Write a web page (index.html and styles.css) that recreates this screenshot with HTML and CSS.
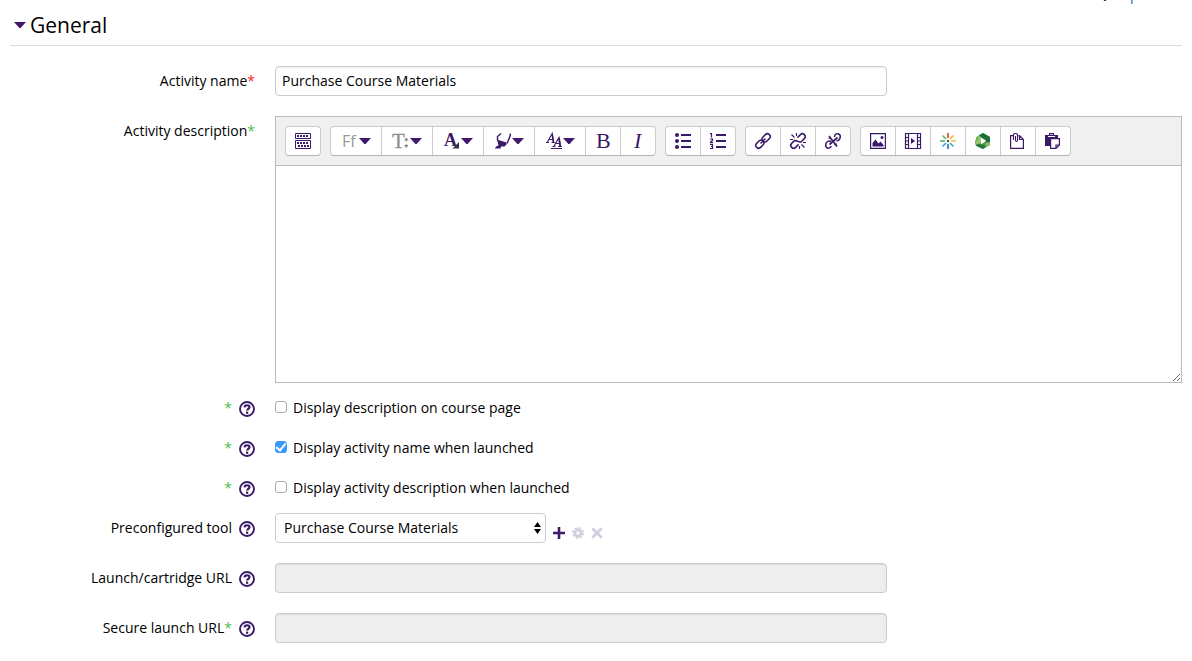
FILE: index.html
```html
<!DOCTYPE html>
<html lang="en">
<head>
<meta charset="utf-8">
<title>General settings</title>
<link rel="stylesheet" href="styles.css">
</head>
<body>
<svg class="defs" aria-hidden="true">
  <symbol id="help" viewBox="0 0 16 16"><circle cx="8" cy="8" r="7" fill="none" stroke="#3a1a66" stroke-width="1.9"/><path d="M5.6 6.4C5.7 3.6 10.5 3.6 10.5 6.2C10.5 7.9 8.1 7.8 8.1 9.6" fill="none" stroke="#3a1a66" stroke-width="2.2"/><rect x="7" y="10.6" width="2.2" height="2.2" fill="#3a1a66"/></symbol>
  <symbol id="caret" viewBox="0 0 12 6"><path d="M0 0H12L6.6 6H5.4Z" fill="#3f1a6b"/></symbol>
</svg>
<main class="page">
  <div class="collapse"><a class="collapse-link" href="#"><svg class="caret" aria-hidden="true"><use href="#caret"/></svg>Expand all</a></div>
  <form class="section">
    <h2 class="title"><svg class="caret" aria-hidden="true"><use href="#caret"/></svg>General</h2>

    <div class="row">
      <div class="label"><label for="name">Activity name</label><span class="star required">*</span></div>
      <div class="field"><input class="text" id="name" type="text" value="Purchase Course Materials"></div>
    </div>

    <div class="row tight">
      <div class="label"><label for="desc">Activity description</label><span class="star">*</span></div>
      <div class="editor">
        <div class="toolbar">
          <div class="group">
            <button type="button" class="tool" aria-label="Toggle toolbar"><svg class="icon" viewBox="0 0 16 16"><path d="M.5.5H15.5V5.5H.5ZM.5 7.5H15.5V15.5H.5Z" fill="none" stroke="#3a1a66"/><path d="M2 3H14M2 10H14M3 13H14" stroke="#3a1a66" stroke-width="2" stroke-dasharray="2 1"/></svg></button>
          </div>
          <div class="group">
            <button type="button" class="tool wide" aria-label="Font family"><svg class="icon" viewBox="0 0 16 16"><text class="sans" x="0" y="14" font-size="16" fill="#999">Ff</text></svg><svg class="caret"><use href="#caret"/></svg></button>
            <button type="button" class="tool wide" aria-label="Font size"><svg class="icon" viewBox="0 0 16 16"><text class="serif" x="-1" y="15" font-size="21" fill="#8f8f8f" stroke="#8f8f8f" stroke-width=".3">T</text><path d="M11 7.5L13.3 4.5L15.6 7.5ZM11 12L13.3 15L15.6 12Z" fill="#888"/><path d="M13.3 7V8.5M13.3 11V12.5" stroke="#999"/></svg><svg class="caret"><use href="#caret"/></svg></button>
            <button type="button" class="tool wide" aria-label="Text color"><svg class="icon" viewBox="0 0 16 16"><text class="serif bold" x="0" y="13" font-size="18" fill="#3a1a66">A</text><path d="M15 9V15.5H8.5Z" fill="#333"/></svg><svg class="caret"><use href="#caret"/></svg></button>
            <button type="button" class="tool wide" aria-label="Highlight"><svg class="icon" viewBox="0 0 16 16"><path d="M6 .5L2.5 3.5V7.5M15.3 .5V2.5L12 10.5" fill="none" stroke="#3a1a66" stroke-width="1.4"/><path d="M2 6.5L11.5 9.5V11.5L9.5 13.5H6L5.5 15.5H0L1 13.5L3.5 12.5Z" fill="#3a1a66"/></svg><svg class="caret"><use href="#caret"/></svg></button>
            <button type="button" class="tool wide" aria-label="Styles"><svg class="icon" viewBox="0 0 16 16"><path d="M0 9.5H3M1.2 9.5L6.2 .5L7.6 9.5M5.6 9.5H9M3.2 6.5H7" fill="none" stroke="#3a1a66" stroke-width="1.1"/><path d="M6.2 1L7.4 9" stroke="#3a1a66" stroke-width="1.6"/><path d="M6.5 13.5H9.5M7.8 13.5L13 4.5L14.3 13.5M12 13.5H16M9.8 10.5H14" fill="none" stroke="#3a1a66" stroke-width="1.1"/><path d="M13 5L14.2 13" stroke="#3a1a66" stroke-width="1.8"/><path d="M5 15.5H16" stroke="#3a1a66"/></svg><svg class="caret"><use href="#caret"/></svg></button>
            <button type="button" class="tool" aria-label="Bold"><svg class="icon" viewBox="0 0 16 16"><text class="serif" x="1" y="15" font-size="22" fill="#3a1a66">B</text></svg></button>
            <button type="button" class="tool" aria-label="Italic"><svg class="icon" viewBox="0 0 16 16"><text class="serif italic" x="4" y="15" font-size="22" fill="#3a1a66">I</text></svg></button>
          </div>
          <div class="group">
            <button type="button" class="tool" aria-label="Bulleted list"><svg class="icon" viewBox="0 0 16 16"><path d="M6 2H16M6 8H16M6 14H16" stroke="#3a1a66" stroke-width="2"/><g fill="#3a1a66"><circle cx="2" cy="2" r="2"/><circle cx="2" cy="8" r="2"/><circle cx="2" cy="14" r="2"/></g></svg></button>
            <button type="button" class="tool" aria-label="Numbered list"><svg class="icon" viewBox="0 0 16 16"><path d="M6 2H16M6 8H16M6 14H16" stroke="#3a1a66" stroke-width="2"/><path d="M0 .6H1.5V4.5M0 6H2.5V7.5L.5 9V9.6H3M0 11.5H2.5V15.5H0M1 13.5H2.5" fill="none" stroke="#3a1a66" stroke-width="1.2"/></svg></button>
          </div>
          <div class="group">
            <button type="button" class="tool" aria-label="Link"><svg class="icon" viewBox="0 0 16 16"><g fill="none" stroke="#3a1a66" stroke-width="1.5" transform="rotate(-45 8 8)"><rect x="-1" y="5.2" width="9" height="5.6" rx="2.8"/><rect x="8" y="5.2" width="9" height="5.6" rx="2.8"/><path d="M4.5 8H11.5"/></g></svg></button>
            <button type="button" class="tool" aria-label="Unlink"><svg class="icon" viewBox="0 0 16 16"><g fill="none" stroke="#3a1a66" stroke-width="1.5"><g transform="rotate(-45 8 8)"><path d="M6 10.8H1.8A2.8 2.8 0 0 1 1.8 5.2H6L9 10.8H14.2A2.8 2.8 0 0 0 14.2 5.2H10"/></g><path d="M6.5 0V3M1.5 1.5L4.5 4.5M0 6.5H3M9.5 13V16M11.5 11.5L14.5 14.5M13 9.5H16" stroke-width="1.1"/></g></svg></button>
            <button type="button" class="tool" aria-label="Prevent automatic links"><svg class="icon" viewBox="0 0 16 16"><g fill="none" stroke="#3a1a66" stroke-width="1.5"><path d="M6 9C4.5 7 .7 8.5 .7 12C.7 16 5 16.2 6.3 13M9.5 4C9.5 1 12 .5 13.2 .8C16.5 2 15.8 7.5 11.5 8"/><path d="M4 3L12 13.5M12.5 4.5L4.5 11.5" stroke-width="1.7"/><path d="M9 11.5L12 11M3.5 5.5L5.5 5" stroke-width="1"/></g></svg></button>
          </div>
          <div class="group">
            <button type="button" class="tool" aria-label="Image"><svg class="icon" viewBox="0 0 16 16"><path d="M.6.6H15.4V15.4H.6Z" fill="none" stroke="#3a1a66" stroke-width="1.2"/><path d="M2.5 13.5V10L5.5 6.5L8.5 10.5L10.5 8.5L13.5 12V13.5Z" fill="#3a1a66"/><circle cx="12" cy="4.5" r="1.5" fill="#3a1a66"/></svg></button>
            <button type="button" class="tool" aria-label="Media"><svg class="icon" viewBox="0 0 16 16"><path d="M.5.5H15.5V15.5H.5ZM3.5 0V16M12.5 0V16M0 4.5H4M0 8H4M0 11.5H4M12 4.5H16M12 8H16M12 11.5H16" fill="none" stroke="#3a1a66" stroke-width="1.2"/><path d="M6 5L10 8L6 11Z" fill="#3a1a66"/></svg></button>
            <button type="button" class="tool" aria-label="Kaltura media"><svg class="icon" viewBox="0 0 16 16"><g stroke-width="1.6"><path d="M8 0V5" stroke="#e5402d"/><path d="M10 6L13.5 2.5" stroke="#f3b52c"/><path d="M11 8H16" stroke="#f3c945"/><path d="M10 10L13.5 13.5" stroke="#39a6cd"/><path d="M8 11V16" stroke="#2b72b9"/><path d="M6 10L2.5 13.5" stroke="#2da5cf"/><path d="M0 8H5" stroke="#55b66d"/><path d="M2.5 2.5L6 6" stroke="#65b75d"/></g><circle cx="8" cy="8" r="1.2" fill="#4a4a4a"/></svg></button>
            <button type="button" class="tool" aria-label="Ensemble video"><svg class="icon" viewBox="0 0 16 16"><path d="M8 0L15 4V12L8 16L1 13L0 9L1.5 4Z" fill="#4f9c4b"/><path d="M8 0L15 4V10L10.5 9V6.5L5 3.5L4 2.3Z" fill="#1b7039"/><path d="M3.5 2.5L6 4V9L3 12.5L0 11Z" fill="#8fc566"/><path d="M1 11.5L5.5 10.5L11 13.5L8 16L2 13Z" fill="#27783d"/><path d="M10.5 10L15 9V12L11 14Z" fill="#8abd63"/><path d="M5.8 4.5L11.2 8L5.8 11.5Z" fill="#fff"/></svg></button>
            <button type="button" class="tool" aria-label="Manage files"><svg class="icon" viewBox="0 0 16 16"><path d="M3 2.6H.6V15.4H13.4V6.5L9.5 2.6H8.5M9.5 2.6V6.5H13.4" fill="none" stroke="#3a1a66" stroke-width="1.2"/><path d="M3.5 7V1.8C3.5 0 7.5 0 7.5 1.8V7C7.5 9 5.5 9 5.5 7V3" fill="none" stroke="#3a1a66" stroke-width="1.1"/></svg></button>
            <button type="button" class="tool" aria-label="Paste"><svg class="icon" viewBox="0 0 16 16"><path d="M0 2H13V6H6V13H0Z" fill="#3a1a66"/><path d="M4.5 2V.6H8.5V2" fill="none" stroke="#3a1a66" stroke-width="1.2"/><path d="M3 3.5H10" stroke="#fff"/><path d="M5.6 5.6H14.4V12L11 15.4H5.6ZM14.4 12H11V15.4" fill="#fff" stroke="#3a1a66" stroke-width="1.2"/></svg></button>
          </div>
        </div>
        <textarea class="area" id="desc"></textarea>
      </div>
    </div>

    <div class="row tight">
      <div class="label"><span class="star">*</span><button type="button" class="help" aria-label="Help with Display description"><svg class="icon"><use href="#help"/></svg></button></div>
      <div class="field"><input class="check" type="checkbox" id="c1"><label for="c1">Display description on course page</label></div>
    </div>
    <div class="row tight">
      <div class="label"><span class="star">*</span><button type="button" class="help" aria-label="Help with Display activity name"><svg class="icon"><use href="#help"/></svg></button></div>
      <div class="field"><input class="check" type="checkbox" id="c2" checked><label for="c2">Display activity name when launched</label></div>
    </div>
    <div class="row tight">
      <div class="label"><span class="star">*</span><button type="button" class="help" aria-label="Help with Display activity description"><svg class="icon"><use href="#help"/></svg></button></div>
      <div class="field"><input class="check" type="checkbox" id="c3"><label for="c3">Display activity description when launched</label></div>
    </div>

    <div class="row">
      <div class="label"><label for="tool">Preconfigured tool</label><button type="button" class="help" aria-label="Help with Preconfigured tool"><svg class="icon"><use href="#help"/></svg></button></div>
      <div class="field">
        <div class="select-wrap"><select class="select" id="tool"><option>Purchase Course Materials</option></select><svg class="updown" viewBox="0 0 7 12" aria-hidden="true"><path d="M0 5L3.5 0L7 5ZM0 7H7L3.5 12Z" fill="#000"/></svg></div>
        <div class="actions">
          <button type="button" class="action" aria-label="Add"><svg class="small" viewBox="0 0 12 12"><path d="M6 0V12M0 6H12" stroke="#3f1a6b" stroke-width="2.6"/></svg></button>
          <button type="button" class="action" aria-label="Edit" disabled><svg class="small" viewBox="0 0 12 12"><circle cx="6" cy="6" r="3.1" fill="none" stroke="#d4cde0" stroke-width="2.8"/><circle cx="6" cy="6" r="5.1" fill="none" stroke="#d4cde0" stroke-width="1.8" stroke-dasharray="2.2 1.8"/></svg></button>
          <button type="button" class="action" aria-label="Delete" disabled><svg class="small" viewBox="0 0 12 12"><path d="M1.2 1.2L10.8 10.8M10.8 1.2L1.2 10.8" stroke="#d4cde0" stroke-width="2.7"/></svg></button>
        </div>
      </div>
    </div>

    <div class="row">
      <div class="label"><label for="url">Launch/cartridge URL</label><button type="button" class="help" aria-label="Help with Launch URL"><svg class="icon"><use href="#help"/></svg></button></div>
      <div class="field"><input class="text" id="url" type="text" disabled></div>
    </div>
    <div class="row">
      <div class="label"><label for="surl">Secure launch URL</label><span class="star">*</span><button type="button" class="help" aria-label="Help with Secure launch URL"><svg class="icon"><use href="#help"/></svg></button></div>
      <div class="field"><input class="text" id="surl" type="text" disabled></div>
    </div>
  </form>
</main>
</body>
</html>
```
FILE: styles.css
```css
* { box-sizing: border-box; }
body {
  margin: 0;
  background: #fff;
  color: #000;
  font: 14px/20px "Open Sans", "Noto Sans", sans-serif;
}
button, input, select, textarea { font: inherit; color: inherit; }
svg { display: block; flex: none; overflow: visible; }
.defs { position: absolute; width: 0; height: 0; }
.page { padding: 0 10px; overflow: hidden; }

.collapse { display: flex; justify-content: flex-end; height: 5px; align-items: flex-end; }
.collapse-link {
  display: flex;
  align-items: center;
  gap: 4px;
  color: #2a5d9f;
  text-decoration: none;
}
.collapse-link .caret { margin-top: 6px; }
.title {
  display: flex;
  align-items: center;
  gap: 4px;
  margin: 0 0 20px;
  padding: 0 0 0 4px;
  height: 41px;
  border-bottom: 1px solid #ddd;
  font-size: 21px;
  font-weight: 400;
  line-height: 40px;
}
.caret { width: 12px; height: 6px; }
.icon { width: 16px; height: 16px; }

.row {
  display: grid;
  grid-template-columns: 245px minmax(0, 1fr);
  column-gap: 20px;
  margin-bottom: 20px;
}
.tight { margin-bottom: 10px; }
.label, .field { display: flex; align-items: center; height: 30px; }
.label { justify-content: flex-end; }
.star { color: #4fbf4f; }
.required { color: #f22; }
.help {
  display: flex;
  margin: 2px 0 0 7px;
  padding: 0;
  border: 0;
  background: none;
}

.text {
  width: 67.5%;
  height: 30px;
  padding: 3px 6px 5px;
  border: 1px solid #ccc;
  border-radius: 4px;
  background: #fff;
  box-shadow: inset 0 1px 1px rgba(0, 0, 0, .08);
}
.text:disabled { background: #eee; }

.editor { border: 1px solid #bbb; }
.toolbar {
  display: flex;
  flex-wrap: wrap;
  gap: 9px;
  padding: 9px;
  background: #f0f0f0;
  border-bottom: 1px solid #bbb;
}
.group {
  display: flex;
  height: 30px;
  border: 1px solid #ccc;
  border-bottom-color: #b3b3b3;
  border-radius: 4px;
  background: #fff;
}
.tool {
  display: flex;
  align-items: center;
  justify-content: center;
  gap: 1px;
  width: 34px;
  padding: 0;
  border: 0;
  background: none;
}
.tool + .tool { width: 35px; border-left: 1px solid #ccc; }
.tool.wide { width: 50px; }
.tool + .tool.wide { width: 51px; }
.serif { font-family: "Liberation Serif", serif; }
.sans { font-family: "Open Sans", sans-serif; }
.bold { font-weight: 700; }
.italic { font-style: italic; }
.area {
  display: block;
  width: 100%;
  height: 216px;
  padding: 6px;
  border: 0;
  outline: 0;
  resize: vertical;
}

.check {
  appearance: none;
  width: 12px;
  height: 12px;
  margin: 0 6px 2px 0;
  border: 1px solid #aaa;
  border-radius: 3px;
  background: #fff;
}
.check:checked {
  border-color: #3b99fc;
  background: #3b99fc;
  display: flex;
  align-items: center;
  justify-content: center;
}
.check:checked::before {
  content: "";
  width: 4px;
  height: 8px;
  margin-bottom: 2px;
  border: solid #fff;
  border-width: 0 2px 2px 0;
  transform: rotate(40deg);
}

.select-wrap { position: relative; width: 271px; }
.select {
  appearance: none;
  display: block;
  width: 100%;
  height: 30px;
  padding: 0 20px 0 8px;
  border: 1px solid #ccc;
  border-radius: 4px;
  background: #fff;
}
.updown {
  position: absolute;
  right: 5px;
  top: 9px;
  width: 7px;
  height: 12px;
  pointer-events: none;
}
.actions { display: flex; gap: 7px; margin: 10px 0 0 7px; }
.action { padding: 0; border: 0; background: none; }
.small { width: 12px; height: 12px; }
```
